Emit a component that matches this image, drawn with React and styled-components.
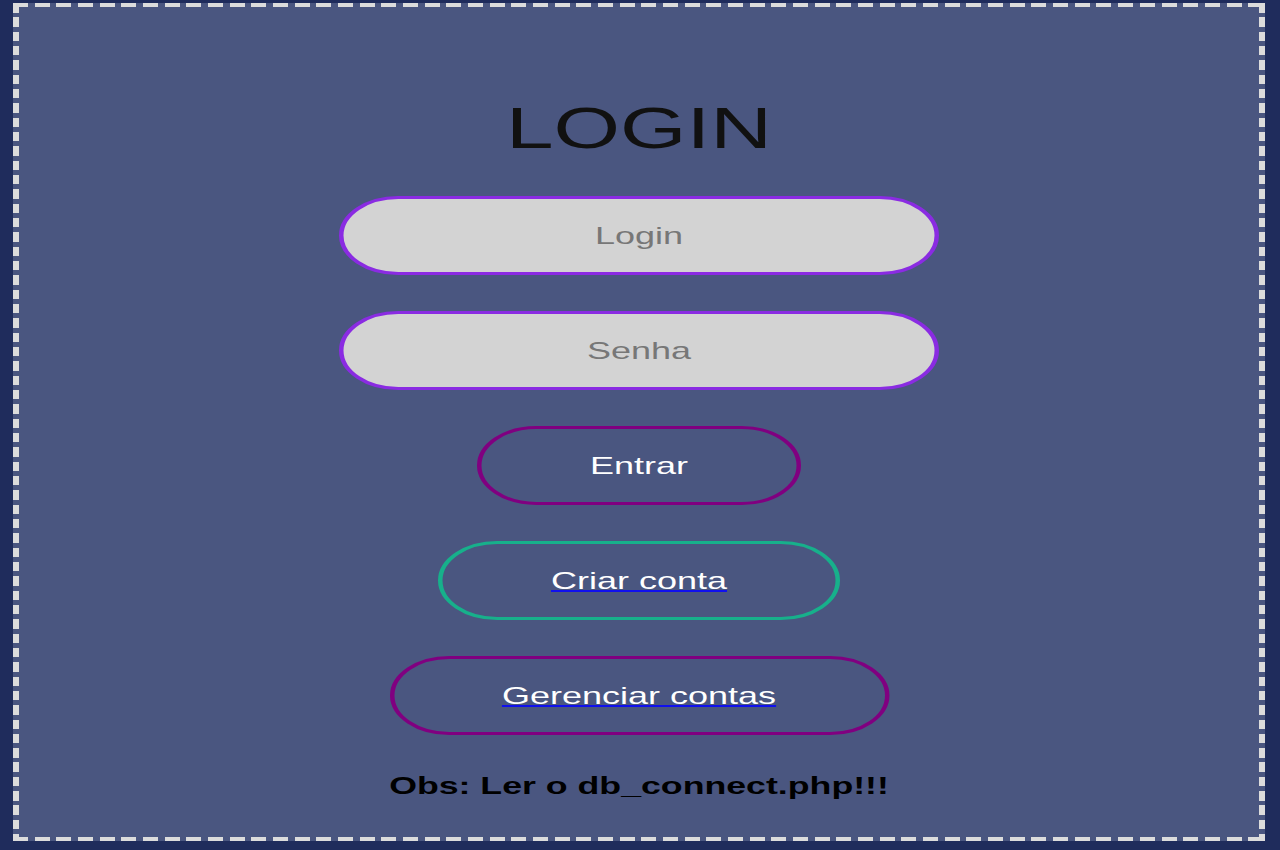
import styled, { createGlobalStyle } from "styled-components";

const GlobalStyle = createGlobalStyle`
  html, body {
    margin: 0;
    padding: 0;
    background: #1f2c5c;
    font-family: "Liberation Sans", Arial, sans-serif;
  }
`;

const dashH = "repeating-linear-gradient(to right, #dcdcdc 0 15px, transparent 15px 21.67px)";
const dashV = "repeating-linear-gradient(to bottom, #dcdcdc 0 9.5px, transparent 9.5px 14.33px)";

const Page = styled.div`
  width: 1280px;
  height: 850px;
  padding: 3px 0 0 13px;
  box-sizing: border-box;
  overflow: hidden;
`;

const Panel = styled.main`
  width: 1252px;
  height: 838px;
  box-sizing: border-box;
  padding-top: 97px;
  display: flex;
  justify-content: center;
  background:
    ${dashH} left top / 100% 4px no-repeat,
    ${dashH} left bottom / 100% 4px no-repeat,
    ${dashV} left top / 6px 100% no-repeat,
    ${dashV} right top / 6px 100% no-repeat,
    #4a5680;
`;

// the whole form is drawn stretched sideways, as in the screenshot
const Form = styled.form`
  width: 440px;
  display: flex;
  flex-direction: column;
  align-items: center;
  transform: scaleX(1.5);
  transform-origin: center top;
`;

const Title = styled.h1`
  margin: 0 0 39px;
  font-size: 57px;
  line-height: 1;
  font-weight: 400;
  color: #111;
`;

const Field = styled.input`
  width: 400px;
  height: 79px;
  box-sizing: border-box;
  margin-bottom: 36px;
  border: 3px solid #8a2be2;
  border-radius: 50px;
  background: #d3d3d3;
  font-family: inherit;
  font-size: 24px;
  text-align: center;
  outline: none;

  &::placeholder {
    color: #777;
  }
`;

const Pill = styled.a`
  width: ${(p) => p.$w}px;
  height: 79px;
  box-sizing: border-box;
  margin-bottom: 36px;
  display: flex;
  align-items: center;
  justify-content: center;
  border: 3px solid ${(p) => p.$color};
  border-radius: 50px;
  background: transparent;
  color: #fff;
  font-family: inherit;
  font-size: 24px;
  text-decoration: ${(p) => (p.$link ? "underline" : "none")};
  text-decoration-color: #1010ee;
  text-decoration-thickness: 2px;
  cursor: pointer;
`;

const Note = styled.p`
  margin: 3px 0 0;
  font-size: 23.8px;
  line-height: 1;
  font-weight: 700;
  color: #000;
`;

const App = () => {
  return (
    <>
      <GlobalStyle />
      <Page>
        <Panel>
          <Form onSubmit={(e) => e.preventDefault()}>
            <Title>LOGIN</Title>
            <Field type="text" placeholder="Login" />
            <Field type="password" placeholder="Senha" />
            <Pill as="button" type="submit" $w={216} $color="#800080">
              Entrar
            </Pill>
            <Pill href="#" $w={268} $color="#17b08b" $link>
              Criar conta
            </Pill>
            <Pill href="#" $w={333} $color="#800080" $link>
              Gerenciar contas
            </Pill>
            <Note>Obs: Ler o db_connect.php!!!</Note>
          </Form>
        </Panel>
      </Page>
    </>
  );
};

export default App;
